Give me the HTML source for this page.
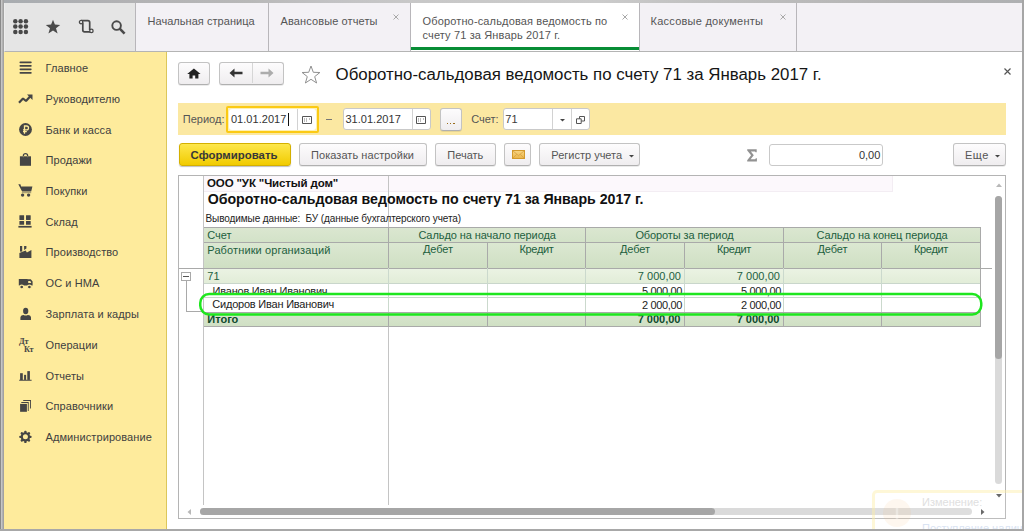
<!DOCTYPE html>
<html><head><meta charset="utf-8">
<style>
*{margin:0;padding:0;box-sizing:border-box}
html,body{width:1024px;height:531px;overflow:hidden;background:#fff;font-family:"Liberation Sans",sans-serif;font-size:11px;color:#333}
.a{position:absolute}
.t{position:absolute;white-space:nowrap}
.btn{position:absolute;border:1px solid #c3c3c3;border-bottom-color:#b0b0b0;border-radius:3px;background:linear-gradient(#fdfcfd,#efedef);box-shadow:0 1px 0 rgba(0,0,0,.08)}
.fld{position:absolute;border:1px solid #c9c9c9;border-radius:3px;background:#fff}
</style></head><body>
<div class="a" style="left:4px;top:3px;width:131px;height:49px;background:#e5e5e5;border-bottom:1px solid #b4b4b4;border-left:1px solid #ededed"></div>
<svg class="a" style="left:13px;top:19px" width="16" height="16" viewBox="0 0 16 16"><g fill="#484848"><circle cx="2.30" cy="2.30" r="2.25"/><circle cx="2.30" cy="7.60" r="2.25"/><circle cx="2.30" cy="12.90" r="2.25"/><circle cx="7.60" cy="2.30" r="2.25"/><circle cx="7.60" cy="7.60" r="2.25"/><circle cx="7.60" cy="12.90" r="2.25"/><circle cx="12.90" cy="2.30" r="2.25"/><circle cx="12.90" cy="7.60" r="2.25"/><circle cx="12.90" cy="12.90" r="2.25"/></g></svg>
<svg class="a" style="left:45px;top:19px" width="16" height="16" viewBox="0 0 16 16"><path fill="#4a4a4a" d="M8 0.8 L9.9 5.6 L15.2 5.9 L11 9.3 L12.6 14.6 L8 11.5 L3.4 14.6 L5 9.3 L0.8 5.9 L6.1 5.6Z"/></svg>
<svg class="a" style="left:78px;top:19px" width="16" height="16" viewBox="0 0 16 16"><g fill="none" stroke="#484848" stroke-width="1.7"><path d="M3.1 1.6 H9.9 Q11.7 1.6 11.7 3.4 V11"/><path d="M4.8 3.5 V11.1 Q4.8 12.9 6.6 12.9 H13.4"/></g><g fill="#ececec" stroke="#484848" stroke-width="1.3"><circle cx="3.1" cy="3.1" r="1.7"/><circle cx="13.4" cy="11.9" r="1.7"/></g></svg>
<svg class="a" style="left:111px;top:20px" width="15" height="15" viewBox="0 0 15 15"><g fill="none" stroke="#4a4a4a"><circle cx="5.6" cy="5.6" r="4.3" stroke-width="1.9"/><path d="M8.7 8.7 L13.6 13.6" stroke-width="2.6"/></g></svg>
<div class="a" style="left:135px;top:3px;width:887px;height:49px;background:#f3f1f5;border-bottom:1px solid #b4b4b4;border-left:1px solid #b8b6ba"></div>
<div class="a" style="left:268px;top:3px;width:1px;height:48px;background:#b8b6ba"></div>
<div class="a" style="left:410px;top:3px;width:1px;height:48px;background:#b8b6ba"></div>
<div class="a" style="left:639px;top:3px;width:1px;height:48px;background:#b8b6ba"></div>
<div class="a" style="left:796px;top:3px;width:1px;height:48px;background:#b8b6ba"></div>
<div class="a" style="left:411px;top:3px;width:228px;height:48px;background:#fff"></div>
<div class="a" style="left:411px;top:47px;width:228px;height:3px;background:#078d35"></div>
<div class="t" style="left:147.5px;top:16.00px;font-size:11px;line-height:11px;color:#555555;letter-spacing:0.044px;">Начальная страница</div>
<div class="t" style="left:280.5px;top:16.00px;font-size:11px;line-height:11px;color:#555555;letter-spacing:0.116px;">Авансовые отчеты</div>
<div class="t" style="left:422.5px;top:16.00px;font-size:11px;line-height:11px;color:#555555;letter-spacing:0.149px;">Оборотно-сальдовая ведомость по</div>
<div class="t" style="left:422.5px;top:30.00px;font-size:11px;line-height:11px;color:#555555;letter-spacing:0.14px;">счету 71 за Январь 2017 г.</div>
<div class="t" style="left:650.5px;top:16.00px;font-size:11px;line-height:11px;color:#555555;letter-spacing:0.251px;">Кассовые документы</div>
<svg class="a" style="left:393px;top:13.5px" width="6" height="6" viewBox="0 0 6 6"><path d="M0.5 0.5 L5.5 5.5 M5.5 0.5 L0.5 5.5" stroke="#a8a8a8" stroke-width="1"/></svg>
<svg class="a" style="left:622px;top:13.5px" width="6" height="6" viewBox="0 0 6 6"><path d="M0.5 0.5 L5.5 5.5 M5.5 0.5 L0.5 5.5" stroke="#a8a8a8" stroke-width="1"/></svg>
<svg class="a" style="left:779.5px;top:13.5px" width="6" height="6" viewBox="0 0 6 6"><path d="M0.5 0.5 L5.5 5.5 M5.5 0.5 L0.5 5.5" stroke="#a8a8a8" stroke-width="1"/></svg>
<div class="a" style="left:4px;top:52px;width:163px;height:477px;background:#feeb9c;border-right:1px solid #dcc75a"></div>
<div class="t" style="left:45.5px;top:63.00px;font-size:11px;line-height:11px;color:#404040;letter-spacing:0.09px;">Главное</div>
<div class="t" style="left:45.5px;top:94.00px;font-size:11px;line-height:11px;color:#404040;letter-spacing:0.09px;">Руководителю</div>
<div class="t" style="left:45.5px;top:125.00px;font-size:11px;line-height:11px;color:#404040;letter-spacing:0.09px;">Банк и касса</div>
<div class="t" style="left:45.5px;top:155.00px;font-size:11px;line-height:11px;color:#404040;letter-spacing:0.09px;">Продажи</div>
<div class="t" style="left:45.5px;top:186.00px;font-size:11px;line-height:11px;color:#404040;letter-spacing:0.09px;">Покупки</div>
<div class="t" style="left:45.5px;top:217.00px;font-size:11px;line-height:11px;color:#404040;letter-spacing:0.09px;">Склад</div>
<div class="t" style="left:45.5px;top:247.00px;font-size:11px;line-height:11px;color:#404040;letter-spacing:0.09px;">Производство</div>
<div class="t" style="left:45.5px;top:278.00px;font-size:11px;line-height:11px;color:#404040;letter-spacing:0.09px;">ОС и НМА</div>
<div class="t" style="left:45.5px;top:309.00px;font-size:11px;line-height:11px;color:#404040;letter-spacing:0.09px;">Зарплата и кадры</div>
<div class="t" style="left:45.5px;top:340.00px;font-size:11px;line-height:11px;color:#404040;letter-spacing:0.09px;">Операции</div>
<div class="t" style="left:45.5px;top:371.00px;font-size:11px;line-height:11px;color:#404040;letter-spacing:0.09px;">Отчеты</div>
<div class="t" style="left:45.5px;top:401.00px;font-size:11px;line-height:11px;color:#404040;letter-spacing:0.09px;">Справочники</div>
<div class="t" style="left:45.5px;top:432.00px;font-size:11px;line-height:11px;color:#404040;letter-spacing:0.09px;">Администрирование</div>
<svg class="a" style="left:19px;top:61px" width="13" height="13" viewBox="0 0 13 13"><g fill="#454545"><rect x="0.5" y="0.55" width="12.2" height="1.7" rx="0.8"/><rect x="0.5" y="4.05" width="12.2" height="1.7" rx="0.8"/><rect x="0.5" y="7.45" width="12.2" height="1.7" rx="0.8"/><rect x="0.5" y="11.05" width="12.2" height="1.7" rx="0.8"/></g></svg>
<svg class="a" style="left:18px;top:94px" width="15" height="10" viewBox="0 0 15 10"><path d="M1 8.8 L5 4.5 L8 7 L12.3 2.3" fill="none" stroke="#454545" stroke-width="2.2" stroke-linejoin="bevel"/><path d="M9 0.5 H14.5 V6Z" fill="#454545"/></svg>
<svg class="a" style="left:19px;top:123px" width="13" height="13" viewBox="0 0 13 13"><circle cx="6.5" cy="6.5" r="6.4" fill="#454545"/><path d="M5.5 10.8 V3 H7.6 Q9.5 3 9.5 4.9 Q9.5 6.8 7.6 6.8 H4 M4 8.7 H7.8" fill="none" stroke="#feeb9c" stroke-width="1.3"/></svg>
<svg class="a" style="left:19px;top:152px" width="13" height="14" viewBox="0 0 13 14"><path d="M0.9 4.3 H12 V13.8 H0.9Z" fill="#454545"/><path d="M4.4 6 V3.6 Q4.4 1.7 6.5 1.7 Q8.6 1.7 8.6 3.6 V6" fill="none" stroke="#454545" stroke-width="1.3"/><path d="M4.3 4.3 V5.2 M8.7 4.3 V5.2" stroke="#feeb9c" stroke-width="0.6"/></svg>
<svg class="a" style="left:18px;top:184px" width="15" height="14" viewBox="0 0 15 14"><path d="M0.3 0.3 H2.4 L3.1 2.6 H14.4 L13.2 7.6 H4.1Z" fill="#454545"/><rect x="3.8" y="8.2" width="9.4" height="1" fill="#454545" opacity="0.55"/><circle cx="4.6" cy="11.1" r="1.7" fill="#454545"/><circle cx="10.6" cy="11.1" r="1.7" fill="#454545"/></svg>
<svg class="a" style="left:18px;top:215px" width="15" height="13" viewBox="0 0 15 13"><g fill="#454545"><rect x="1.4" y="0.2" width="4.7" height="4.7" rx="0.3"/><rect x="8" y="0.2" width="4.7" height="4.7" rx="0.3"/><rect x="1.4" y="5.9" width="4.7" height="3.8" rx="0.3"/><rect x="8" y="5.9" width="4.7" height="3.8" rx="0.3"/><rect x="0.4" y="10.9" width="13.2" height="1.7"/></g></svg>
<svg class="a" style="left:19px;top:246px" width="13" height="13" viewBox="0 0 13 13"><path d="M0.4 12 V6.9 L6.6 4.5 L7.9 6.5 L12.4 3.9 V12Z" fill="#454545"/><rect x="1" y="0" width="2.2" height="5.6" fill="#454545"/><path d="M5.1 0 H7.4 V2.5 L5.1 4Z" fill="#454545"/></svg>
<svg class="a" style="left:18px;top:278px" width="16" height="12" viewBox="0 0 16 12"><path fill-rule="evenodd" d="M0.8 0.9 H9.5 V1.3 H12.8 L14.6 3.6 V7.6 H0.8Z M10.2 3 H12.3 L13.3 4.9 H10.2Z" fill="#454545"/><circle cx="3.7" cy="9" r="1.9" fill="#454545" stroke="#feeb9c" stroke-width="1.1"/><circle cx="11.4" cy="9" r="1.9" fill="#454545" stroke="#feeb9c" stroke-width="1.1"/></svg>
<svg class="a" style="left:20px;top:307px" width="12" height="13" viewBox="0 0 12 13"><ellipse cx="5.7" cy="4" rx="2.6" ry="3.3" fill="#454545"/><path d="M0.4 12.9 V10.6 Q0.4 8.2 3.6 7.9 Q5.7 8.9 7.8 7.9 Q11 8.2 11 10.6 V12.9Z" fill="#454545"/></svg>
<div class="t" style="left:19px;top:338px;font-family:'Liberation Serif',serif;font-size:8.2px;line-height:8px;font-weight:bold;color:#454545;letter-spacing:-0.2px">Дт</div>
<div class="t" style="left:24px;top:346px;font-family:'Liberation Serif',serif;font-size:8.2px;line-height:8px;font-weight:bold;color:#454545;letter-spacing:-0.2px">Кт</div>
<svg class="a" style="left:19px;top:371px" width="13" height="10" viewBox="0 0 13 10"><g fill="#454545"><rect x="1.1" y="2.2" width="2.7" height="6.8"/><rect x="5.1" y="3.85" width="2" height="5.1"/><rect x="8.3" y="0.1" width="2.6" height="8.8"/><rect x="0.2" y="8.75" width="12.4" height="1"/></g></svg>
<svg class="a" style="left:20px;top:400px" width="12" height="13" viewBox="0 0 12 13"><g fill="#454545"><rect x="0.1" y="3.9" width="6.8" height="7.9"/><path d="M1.3 2.1 H8.7 V11 H7.8 V3 H1.3Z"/><path d="M3.2 0 H11 V8.6 H10.1 V0.9 H3.2Z"/></g></svg>
<svg class="a" style="left:19px;top:430px" width="14" height="14" viewBox="0 0 14 14"><g fill="#454545" transform="translate(6.4 6.85)"><circle r="4.7"/><rect x="-1.15" y="-6.2" width="2.3" height="12.4" rx="0.9" transform="rotate(0)"/><rect x="-1.15" y="-6.2" width="2.3" height="12.4" rx="0.9" transform="rotate(45)"/><rect x="-1.15" y="-6.2" width="2.3" height="12.4" rx="0.9" transform="rotate(90)"/><rect x="-1.15" y="-6.2" width="2.3" height="12.4" rx="0.9" transform="rotate(135)"/></g><circle cx="6.4" cy="6.85" r="2.5" fill="#feeb9c"/></svg>
<div class="btn" style="left:178px;top:62px;width:32px;height:22.5px"></div>
<svg class="a" style="left:187.3px;top:67.5px" width="14" height="11" viewBox="0 0 14 11"><path d="M6.9 0.4 L13.6 5.9 H11.4 V10.4 H8.2 V7.4 H5.6 V10.4 H2.4 V5.9 H0.2Z" fill="#222"/></svg>
<div class="btn" style="left:219px;top:62px;width:65px;height:22.5px"></div>
<div class="a" style="left:252px;top:63px;width:1px;height:20px;background:#d6d6d6"></div>
<svg class="a" style="left:229px;top:68px" width="14" height="10" viewBox="0 0 14 10"><path d="M0.5 5 L5.5 0.5 V3.7 H13.5 V6.3 H5.5 V9.5Z" fill="#333"/></svg>
<svg class="a" style="left:260px;top:68px" width="14" height="10" viewBox="0 0 14 10"><path d="M13.5 5 L8.5 0.5 V3.7 H0.5 V6.3 H8.5 V9.5Z" fill="#acacac"/></svg>
<svg class="a" style="left:300.5px;top:64.5px" width="20" height="19" viewBox="0 0 20 19"><path d="M10 1 L12.3 7.3 L18.9 7.5 L13.7 11.6 L15.6 18 L10 14.3 L4.4 18 L6.3 11.6 L1.1 7.5 L7.7 7.3Z" fill="none" stroke="#909090" stroke-width="1"/></svg>
<div class="t" style="left:335.6px;top:67.00px;font-size:16.85px;line-height:16.85px;color:#151515;">Оборотно-сальдовая ведомость по счету 71 за Январь 2017 г.</div>
<svg class="a" style="left:1003.5px;top:67.5px" width="7" height="7" viewBox="0 0 7 7"><path d="M0.5 0.5 L6.5 6.5 M6.5 0.5 L0.5 6.5" stroke="#555" stroke-width="1.2"/></svg>
<div class="a" style="left:177.5px;top:102.5px;width:828px;height:32.5px;background:#fbe8a2"></div>
<div class="t" style="left:182.8px;top:114.00px;font-size:11px;line-height:11px;color:#555;">Период:</div>
<div class="a" style="left:225.5px;top:105.5px;width:93px;height:27px;border:2px solid #fbca14;border-radius:2px;background:#fdf0b4"></div>
<div class="a" style="left:229px;top:109px;width:86.5px;height:20.5px;background:#fff;border-radius:3px"></div>
<div class="t" style="left:230.9px;top:114.00px;font-size:11px;line-height:11px;color:#333;letter-spacing:0.049px;">01.01.2017</div>
<div class="a" style="left:288px;top:112.5px;width:1px;height:13px;background:#111"></div>
<div class="a" style="left:297px;top:109px;width:1px;height:21px;background:#d2d2d2"></div>
<svg class="a" style="left:302px;top:116px" width="10" height="8" viewBox="0 0 10 8"><path d="M0.5 0.5 H9.5 V7.5 H0.5Z" fill="#fff" stroke="#555" stroke-width="1"/><g fill="#bbb"><rect x="2" y="2" width="1" height="4"/><rect x="4" y="2" width="1" height="4"/><rect x="7" y="2" width="1" height="2"/></g></svg>
<div class="a" style="left:326px;top:119px;width:6px;height:1.3px;background:#777"></div>
<div class="fld" style="left:342.5px;top:108px;width:88px;height:22px"></div>
<div class="t" style="left:345.4px;top:114.00px;font-size:11px;line-height:11px;color:#333;letter-spacing:0.038px;">31.01.2017</div>
<div class="a" style="left:411.5px;top:109px;width:1px;height:20px;background:#d2d2d2"></div>
<svg class="a" style="left:416px;top:116px" width="10" height="8" viewBox="0 0 10 8"><path d="M0.5 0.5 H9.5 V7.5 H0.5Z" fill="#fff" stroke="#555" stroke-width="1"/><g fill="#bbb"><rect x="2" y="2" width="1" height="4"/><rect x="4" y="2" width="1" height="4"/><rect x="7" y="2" width="1" height="2"/></g></svg>
<div class="btn" style="left:439.5px;top:107.5px;width:22px;height:23px"></div>
<div class="a" style="left:446.5px;top:122.5px;width:1.5px;height:1.5px;background:#9a6c1c"></div>
<div class="a" style="left:449.8px;top:122.5px;width:1.5px;height:1.5px;background:#9a6c1c"></div>
<div class="a" style="left:453.1px;top:122.5px;width:1.5px;height:1.5px;background:#9a6c1c"></div>
<div class="t" style="left:471.2px;top:114.00px;font-size:11px;line-height:11px;color:#555;">Счет:</div>
<div class="fld" style="left:502.5px;top:108px;width:87px;height:22px"></div>
<div class="t" style="left:505.3px;top:114.00px;font-size:11px;line-height:11px;color:#3a3a3a;">71</div>
<div class="a" style="left:552px;top:109px;width:1px;height:20px;background:#d2d2d2"></div>
<div class="a" style="left:571px;top:109px;width:1px;height:20px;background:#d2d2d2"></div>
<svg class="a" style="left:560px;top:118.5px" width="5" height="3" viewBox="0 0 5 3"><path d="M0 0 H5 L2.5 2.6Z" fill="#444"/></svg>
<svg class="a" style="left:576px;top:116px" width="9" height="8" viewBox="0 0 9 8"><path d="M3.5 0.5 H8.5 V5 H3.5Z" fill="#fff" stroke="#555" stroke-width="1"/><path d="M0.5 2.8 H5.2 V7.5 H0.5Z" fill="#fff" stroke="#555" stroke-width="1"/></svg>
<div class="btn" style="left:178.5px;top:143.3px;width:112px;height:23px;background:linear-gradient(#fde74c,#f1cb00);border-color:#d4b000;box-shadow:0 1px 1px rgba(0,0,0,.25)"></div>
<div class="t" style="left:190.6px;top:150.00px;font-size:11.4px;line-height:11.4px;color:#383838;font-weight:bold;letter-spacing:0.014px;">Сформировать</div>
<div class="btn" style="left:298.7px;top:143.3px;width:128px;height:23px"></div>
<div class="t" style="left:311px;top:150.00px;font-size:11px;line-height:11px;color:#555555;letter-spacing:0.060px;">Показать настройки</div>
<div class="btn" style="left:435px;top:143.3px;width:61px;height:23px"></div>
<div class="t" style="left:447.3px;top:150.00px;font-size:11px;line-height:11px;color:#555555;">Печать</div>
<div class="btn" style="left:504.3px;top:143.3px;width:26.5px;height:23px"></div>
<svg class="a" style="left:511.5px;top:150px" width="13" height="9" viewBox="0 0 13 9"><defs><linearGradient id="eg" x1="0" y1="0" x2="0" y2="1"><stop offset="0" stop-color="#f8d684"/><stop offset="1" stop-color="#eab548"/></linearGradient></defs><rect x="0.5" y="0.5" width="12" height="8" fill="url(#eg)" stroke="#d39a2c" stroke-width="1"/><path d="M0.8 0.8 L6.5 5.6 L12.2 0.8 M0.8 8.2 L4.8 4.3 M12.2 8.2 L8.2 4.3" fill="none" stroke="#d8a040" stroke-width="0.8"/></svg>
<div class="btn" style="left:539px;top:143.3px;width:100.6px;height:23px"></div>
<div class="t" style="left:551.3px;top:150.00px;font-size:11px;line-height:11px;color:#555555;">Регистр учета</div>
<svg class="a" style="left:629px;top:154.5px" width="5" height="3" viewBox="0 0 5 3"><path d="M0 0 H5 L2.5 2.6Z" fill="#444"/></svg>
<svg class="a" style="left:747px;top:148.5px" width="10" height="13" viewBox="0 0 10 13"><path d="M0.2 0.3 H9.7 V3.3 H8.5 L8.1 2.4 H3.9 L6.8 6.3 L3.6 10.3 H8.3 L8.8 9.2 H9.9 V12.5 H0.2 V11.2 L4.1 6.3 L0.2 1.6Z" fill="#929292"/></svg>
<div class="fld" style="left:769px;top:144px;width:114px;height:22px"></div>
<div class="t" style="right:143.70000000000005px;top:150.00px;font-size:11px;line-height:11px;color:#333;">0,00</div>
<div class="btn" style="left:953px;top:143.3px;width:52.6px;height:23px"></div>
<div class="t" style="left:965px;top:150.00px;font-size:11px;line-height:11px;color:#555555;letter-spacing:0.457px;">Еще</div>
<svg class="a" style="left:995px;top:154.5px" width="5" height="3" viewBox="0 0 5 3"><path d="M0 0 H5 L2.5 2.6Z" fill="#444"/></svg>
<div class="a" style="left:178px;top:175px;width:828px;height:344px;border:1px solid #b4b4b4"></div>
<div class="a" style="left:204px;top:176px;width:689px;height:16px;background:#fcf8fc;border-right:1px solid #f3edf3;border-bottom:1px solid #f3edf3"></div>
<div class="a" style="left:203px;top:176px;width:1px;height:329px;background:#c4c4c4"></div>
<div class="a" style="left:388px;top:176px;width:1px;height:329px;background:#c4c4c4"></div>
<div class="t" style="left:207px;top:178.00px;font-size:11.5px;line-height:11.5px;color:#111;font-weight:bold;letter-spacing:-0.126px;">ООО "УК "Чистый дом"</div>
<div class="t" style="left:207.7px;top:192.00px;font-size:14.2px;line-height:14.2px;color:#111;font-weight:bold;letter-spacing:-0.024px;">Оборотно-сальдовая ведомость по счету 71 за Январь 2017 г.</div>
<div class="t" style="left:205.5px;top:214.00px;font-size:10px;line-height:10px;color:#222;letter-spacing:-0.089px;">Выводимые данные:&nbsp;&nbsp;БУ (данные бухгалтерского учета)</div>
<div class="a" style="left:204px;top:227px;width:777px;height:15px;background:linear-gradient(#dbe7d1,#d3e2c8)"></div>
<div class="a" style="left:204px;top:242px;width:777px;height:26px;background:linear-gradient(#dce8d2,#cfdfc3)"></div>
<div class="a" style="left:204px;top:268px;width:777px;height:15px;background:linear-gradient(#ebf3e4,#e2edd8)"></div>
<div class="a" style="left:204px;top:312px;width:777px;height:14.5px;background:linear-gradient(#d9e6cf,#cfdfc3)"></div>
<div class="a" style="left:204px;top:227px;width:777px;height:1px;background:#a9aaa9"></div>
<div class="a" style="left:204px;top:242px;width:777px;height:1px;background:#a9aaa9"></div>
<div class="a" style="left:179px;top:268px;width:813px;height:1px;background:#a9aaa9"></div>
<div class="a" style="left:204px;top:283px;width:777px;height:1px;background:#c9d6cb"></div>
<div class="a" style="left:204px;top:297px;width:777px;height:1px;background:#c9d6cb"></div>
<div class="a" style="left:204px;top:311.5px;width:777px;height:1px;background:#a9aaa9"></div>
<div class="a" style="left:204px;top:326px;width:777px;height:1px;background:#a9aaa9"></div>
<div class="a" style="left:388px;top:227px;width:1px;height:41px;background:#a9aaa9"></div>
<div class="a" style="left:585px;top:227px;width:1px;height:41px;background:#a9aaa9"></div>
<div class="a" style="left:783px;top:227px;width:1px;height:41px;background:#a9aaa9"></div>
<div class="a" style="left:980px;top:227px;width:1px;height:41px;background:#a9aaa9"></div>
<div class="a" style="left:487px;top:242px;width:1px;height:26px;background:#a9aaa9"></div>
<div class="a" style="left:684px;top:242px;width:1px;height:26px;background:#a9aaa9"></div>
<div class="a" style="left:881px;top:242px;width:1px;height:26px;background:#a9aaa9"></div>
<div class="a" style="left:388px;top:268px;width:1px;height:44px;background:#cbd9cd"></div>
<div class="a" style="left:487px;top:268px;width:1px;height:44px;background:#cbd9cd"></div>
<div class="a" style="left:585px;top:268px;width:1px;height:44px;background:#cbd9cd"></div>
<div class="a" style="left:684px;top:268px;width:1px;height:44px;background:#cbd9cd"></div>
<div class="a" style="left:783px;top:268px;width:1px;height:44px;background:#cbd9cd"></div>
<div class="a" style="left:881px;top:268px;width:1px;height:44px;background:#cbd9cd"></div>
<div class="a" style="left:980px;top:268px;width:1px;height:58px;background:#a9aaa9"></div>
<div class="a" style="left:388px;top:312px;width:1px;height:14px;background:#a9aaa9"></div>
<div class="a" style="left:487px;top:312px;width:1px;height:14px;background:#a9aaa9"></div>
<div class="a" style="left:585px;top:312px;width:1px;height:14px;background:#a9aaa9"></div>
<div class="a" style="left:684px;top:312px;width:1px;height:14px;background:#a9aaa9"></div>
<div class="a" style="left:783px;top:312px;width:1px;height:14px;background:#a9aaa9"></div>
<div class="a" style="left:881px;top:312px;width:1px;height:14px;background:#a9aaa9"></div>
<div class="t" style="left:207.3px;top:230.00px;font-size:11px;line-height:11px;color:#22603e;">Счет</div>
<div class="t" style="left:207.3px;top:245.00px;font-size:11px;line-height:11px;color:#22603e;letter-spacing:0.119px;">Работники организаций</div>
<div class="t" style="left:287.1px;width:400px;text-align:center;top:230.00px;font-size:11px;line-height:11px;color:#22603e;letter-spacing:-0.085px;">Сальдо на начало периода</div>
<div class="t" style="left:484.45000000000005px;width:400px;text-align:center;top:230.00px;font-size:11px;line-height:11px;color:#22603e;letter-spacing:-0.101px;">Обороты за период</div>
<div class="t" style="left:682.05px;width:400px;text-align:center;top:230.00px;font-size:11px;line-height:11px;color:#22603e;letter-spacing:-0.056px;">Сальдо на конец периода</div>
<div class="t" style="left:238.0px;width:400px;text-align:center;top:244.00px;font-size:11px;line-height:11px;color:#22603e;letter-spacing:-0.079px;">Дебет</div>
<div class="t" style="left:336.5px;width:400px;text-align:center;top:244.00px;font-size:11px;line-height:11px;color:#22603e;letter-spacing:-0.321px;">Кредит</div>
<div class="t" style="left:435.0px;width:400px;text-align:center;top:244.00px;font-size:11px;line-height:11px;color:#22603e;letter-spacing:-0.079px;">Дебет</div>
<div class="t" style="left:534.0px;width:400px;text-align:center;top:244.00px;font-size:11px;line-height:11px;color:#22603e;letter-spacing:-0.321px;">Кредит</div>
<div class="t" style="left:632.5px;width:400px;text-align:center;top:244.00px;font-size:11px;line-height:11px;color:#22603e;letter-spacing:-0.079px;">Дебет</div>
<div class="t" style="left:731.0px;width:400px;text-align:center;top:244.00px;font-size:11px;line-height:11px;color:#22603e;letter-spacing:-0.321px;">Кредит</div>
<div class="t" style="left:207.3px;top:271.00px;font-size:11px;line-height:11px;color:#22603e;">71</div>
<div class="t" style="right:343px;top:271.00px;font-size:11px;line-height:11px;color:#22603e;letter-spacing:0.054px;">7 000,00</div>
<div class="t" style="right:244px;top:271.00px;font-size:11px;line-height:11px;color:#22603e;letter-spacing:0.054px;">7 000,00</div>
<div class="t" style="left:212.6px;top:286.00px;font-size:11px;line-height:11px;color:#222;letter-spacing:-0.230px;">Иванов Иван Иванович</div>
<div class="t" style="right:342px;top:286.00px;font-size:11px;line-height:11px;color:#222;letter-spacing:-0.346px;">5 000,00</div>
<div class="t" style="right:243px;top:286.00px;font-size:11px;line-height:11px;color:#222;letter-spacing:-0.346px;">5 000,00</div>
<div class="t" style="left:212.3px;top:299.00px;font-size:11px;line-height:11px;color:#222;letter-spacing:-0.215px;">Сидоров Иван Иванович</div>
<div class="t" style="right:342px;top:300.00px;font-size:11px;line-height:11px;color:#222;letter-spacing:-0.346px;">2 000,00</div>
<div class="t" style="right:243px;top:300.00px;font-size:11px;line-height:11px;color:#222;letter-spacing:-0.346px;">2 000,00</div>
<div class="t" style="left:207.3px;top:314.00px;font-size:11px;line-height:11px;color:#0e4a2c;font-weight:bold;">Итого</div>
<div class="t" style="right:343.5px;top:314.00px;font-size:11px;line-height:11px;color:#0e4a2c;font-weight:bold;">7 000,00</div>
<div class="t" style="right:244.5px;top:314.00px;font-size:11px;line-height:11px;color:#0e4a2c;font-weight:bold;">7 000,00</div>
<div class="a" style="left:181px;top:271.5px;width:9.5px;height:9.5px;border:1px solid #a9a9a9;background:#fff"></div>
<div class="a" style="left:183px;top:276px;width:5.5px;height:1px;background:#555"></div>
<div class="a" style="left:185.5px;top:281px;width:1px;height:30.5px;background:#a9a9a9"></div>
<div class="a" style="left:185.5px;top:311px;width:18px;height:1px;background:#a9a9a9"></div>
<svg class="a" style="left:197px;top:290px" width="790" height="26" viewBox="0 0 790 26"><rect x="3.25" y="4" width="781" height="20.4" rx="9" fill="none" stroke="#1ee61e" stroke-width="2.5"/></svg>
<svg class="a" style="left:996px;top:183px" width="6" height="4" viewBox="0 0 6 4"><path d="M0 4 H6 L3 0.5Z" fill="#b8b8b8"/></svg>
<div class="a" style="left:995px;top:196px;width:7px;height:288px;background:#dadada;border-radius:3.5px"></div>
<div class="a" style="left:995px;top:196px;width:7px;height:163px;background:#a6a6a6;border-radius:3.5px"></div>
<svg class="a" style="left:995.5px;top:494px" width="6" height="4" viewBox="0 0 6 4"><path d="M0 0 H6 L3 3.5Z" fill="#555"/></svg>
<svg class="a" style="left:187px;top:509px" width="4" height="6" viewBox="0 0 4 6"><path d="M4 0 V6 L0.5 3Z" fill="#b8b8b8"/></svg>
<div class="a" style="left:199.5px;top:508.3px;width:772px;height:6.7px;background:#dadada;border-radius:3.5px"></div>
<div class="a" style="left:199.5px;top:508.3px;width:515.5px;height:6.7px;background:#a6a6a6;border-radius:3.5px"></div>
<svg class="a" style="left:981px;top:508.5px" width="4" height="6" viewBox="0 0 4 6"><path d="M0 0 V6 L3.5 3Z" fill="#555"/></svg>
<div class="a" style="left:872px;top:489.5px;width:170px;height:60px;border:3px solid rgba(253,236,159,0.42);border-radius:5px;background:rgba(255,255,255,0.12)"></div>
<svg class="a" style="left:882px;top:498px" width="30" height="30" viewBox="0 0 30 30"><circle cx="15" cy="15" r="14" fill="rgba(250,190,120,0.12)"/><path d="M15 10 V21" stroke="rgba(255,255,255,0.35)" stroke-width="2.5"/></svg>
<div class="t" style="left:922px;top:497.00px;font-size:11px;line-height:11px;color:#e0e0e0;">Изменение:</div>
<div class="t" style="left:922px;top:523.00px;font-size:11px;line-height:11px;color:#dae4f3;">Поступление наличных</div>
<div class="a" style="left:0px;top:0px;width:1024px;height:3px;background:linear-gradient(90deg,#a8acb0 0,#b2b2b4 130px,#b8b8b8 250px,#c2c2c4 330px,#c8c8c8 420px,#cbcbcb 600px,#c0c0c0 700px,#b4b4b4 900px,#aeb0b2 1024px)"></div>
<div class="a" style="left:0px;top:0px;width:4px;height:531px;background:linear-gradient(90deg,#8a8a8a 0,#8a8a8a 1px,#c6c6c6 1px,#c6c6c6 2px,#b2b2b2 2px,#b2b2b2 3px,#a2a2a2 3px)"></div>
<div class="a" style="left:1022px;top:0px;width:2px;height:531px;background:#a6a6a6"></div>
<div class="a" style="left:0px;top:529px;width:1024px;height:2px;background:#a8a8a8"></div>
</body></html>
